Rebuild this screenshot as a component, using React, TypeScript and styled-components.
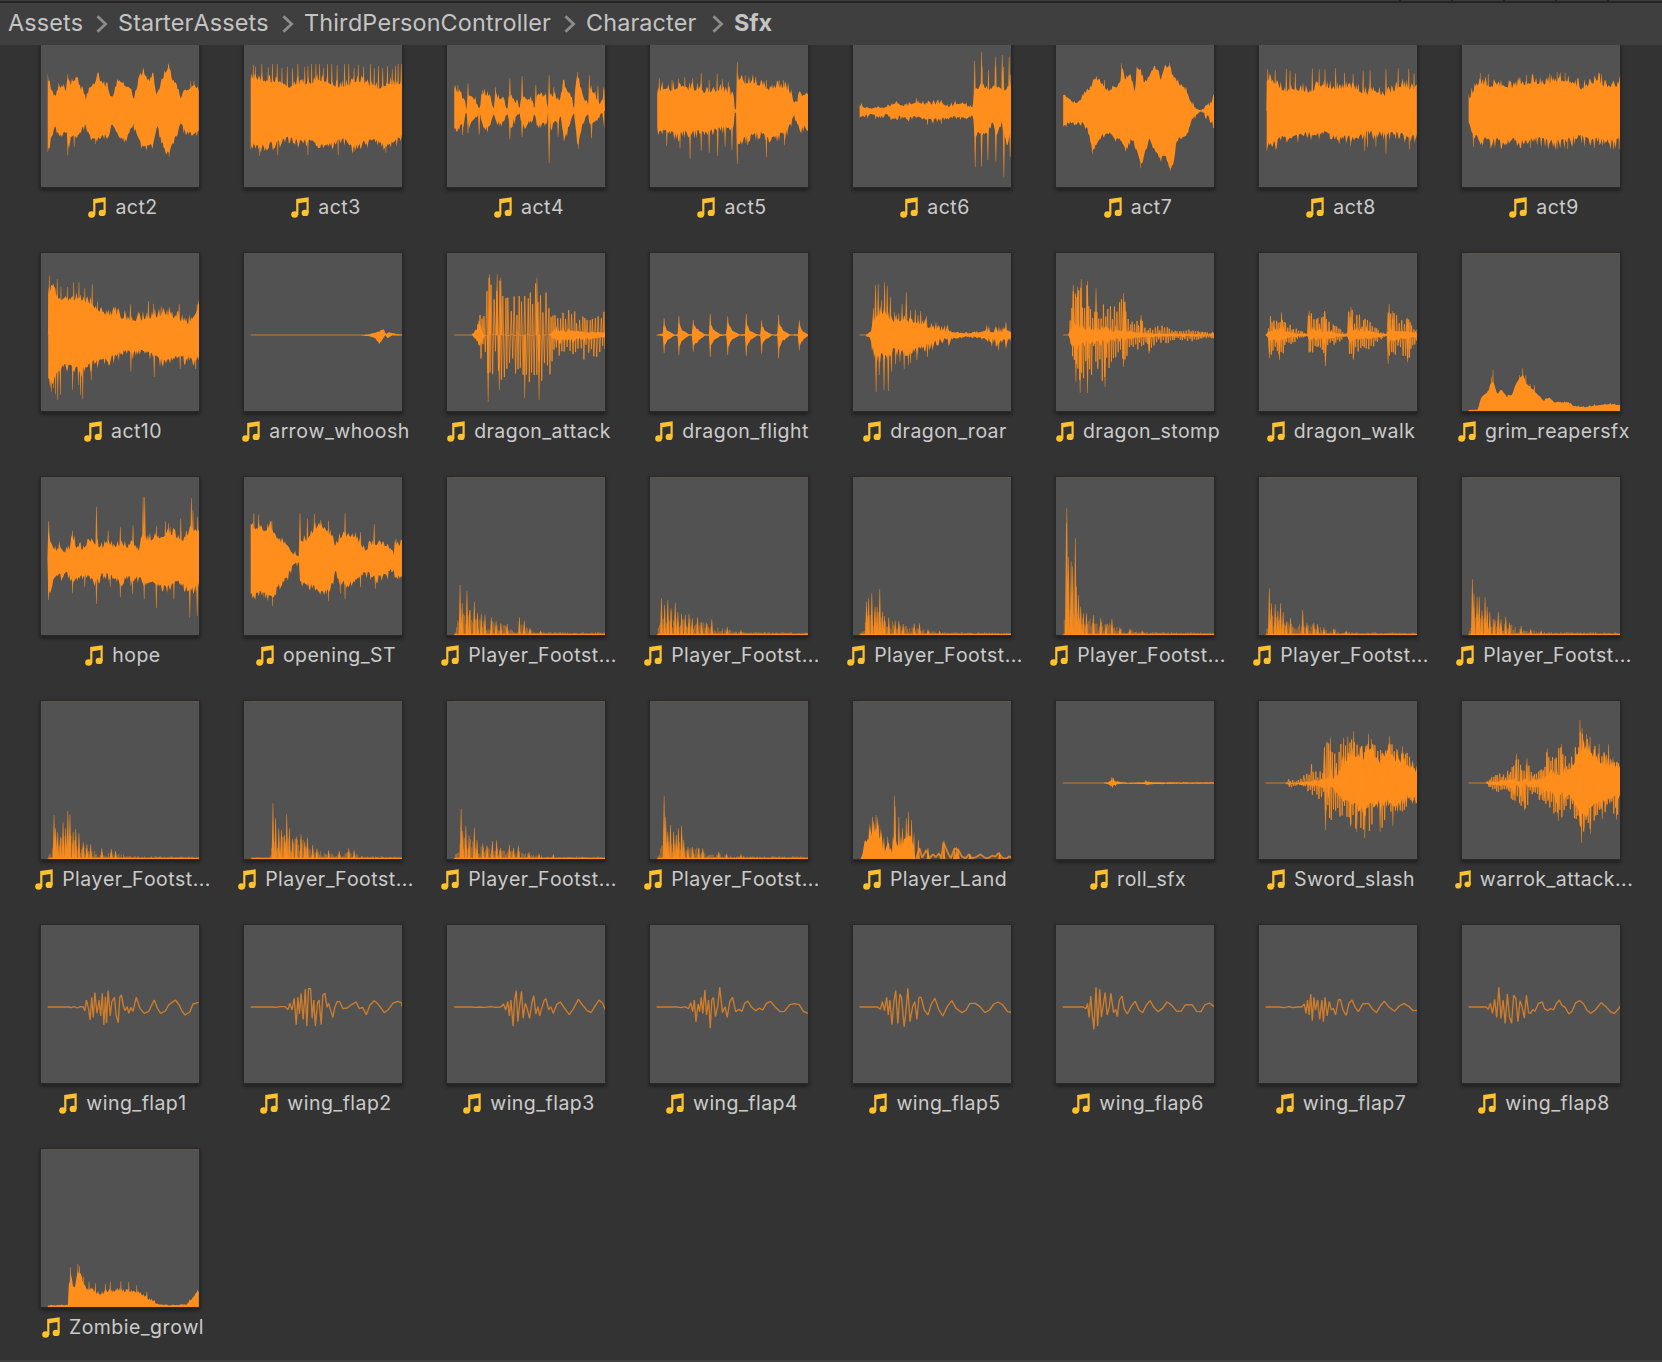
import React from "react";
import styled, { createGlobalStyle } from "styled-components";

const GlobalStyle = createGlobalStyle`
  html, body { margin: 0; padding: 0; background: #333333; overflow: hidden; }
  body { font-family: Inter, "Noto Sans", sans-serif; font-kerning: none; color: #c8c8c8; }
`;

const Panel = styled.div`
  width: 1662px;
  height: 1362px;
  display: flex;
  flex-direction: column;
  background: #333333;
  overflow: hidden;
`;

const TabEdge = styled.div`
  flex: none;
  box-sizing: border-box;
  height: 3px;
  display: flex;
  justify-content: flex-end;
  gap: 50px;
  padding-right: 53px;
  background: #3c3c3c;
  border-bottom: 2px solid #242424;
`;

const TabDivider = styled.i`
  width: 2px;
  height: 1px;
  background: #242424;
`;

const Breadcrumbs = styled.nav`
  flex: none;
  height: 42px;
  display: flex;
  align-items: center;
  gap: 10px;
  padding: 0 0 3px 8px;
  box-sizing: border-box;
  background: #3f3f3f;
`;

const Crumb = styled.span<{ $w: number; $current?: boolean }>`
  width: ${(p) => p.$w}px;
  font-size: 23.4px;
  line-height: 28px;
  font-weight: ${(p) => (p.$current ? 700 : 400)};
  letter-spacing: ${(p) => (p.$current ? 0 : 0.12)}px;
  white-space: nowrap;
  color: #c4c4c4;
`;

const Chevron = styled.svg`
  flex: none;
  width: 12px;
  height: 18px;
  margin-top: 3px;
  fill: none;
  stroke: #8c8c8c;
  stroke-width: 2.8;
`;

const Viewport = styled.main`
  flex: 1;
  overflow: hidden;
  border-bottom: 2px solid #414041;
`;

const Grid = styled.div`
  display: grid;
  grid-template-columns: repeat(8, 158px);
  grid-auto-rows: 224px;
  column-gap: 45px;
  margin-top: -16px;
  padding-left: 41px;
`;

const Asset = styled.div`
  display: flex;
  flex-direction: column;
  align-items: center;
`;

const Preview = styled.div`
  flex: none;
  width: 158px;
  height: 158px;
  background: #525252;
  box-shadow: 0 0 0 1px #2a2a2a, 0 1px 2px 2px rgba(34, 34, 34, 0.55), 0 4px 3px rgba(34, 34, 34, 0.8);
`;

const Wave = styled.svg`
  display: block;
  width: 158px;
  height: 158px;
  overflow: hidden;
`;

const Label = styled.div`
  width: 200px;
  margin-top: 7px;
  padding-left: 6px;
  box-sizing: border-box;
  display: flex;
  justify-content: center;
  align-items: center;
  gap: 9px;
`;

const Name = styled.span`
  font-size: 19.5px;
  line-height: 26px;
  letter-spacing: 0.45px;
  white-space: nowrap;
  color: #cbcbcb;
`;

const Note = styled.svg<{ $small?: boolean }>`
  flex: none;
  width: ${(p) => (p.$small ? 16 : 18)}px;
  height: ${(p) => (p.$small ? 19 : 21)}px;
  margin-top: 0;
  fill: #ffc22d;
`;

const ORANGE = "#ff8e1c";

type Pt = [number, number];
const parse = (s: string): Pt[] =>
  s.trim().split(/\s+/).map((p) => p.split(",").map(Number) as Pt);

const at = (pts: Pt[], x: number): number => {
  if (x <= pts[0][0]) return pts[0][1];
  for (let i = 1; i < pts.length; i++) {
    if (x <= pts[i][0]) {
      const [x0, y0] = pts[i - 1];
      const [x1, y1] = pts[i];
      return x1 === x0 ? y1 : y0 + ((y1 - y0) * (x - x0)) / (x1 - x0);
    }
  }
  return pts[pts.length - 1][1];
};

const random = (seed: number) => () => {
  seed = (seed * 1664525 + 1013904223) % 4294967296;
  return seed / 4294967296;
};

interface Clip {
  name: string;
  small?: boolean;
  /** x position of the tile in the sample sheet */
  ox: number;
  /** solid body: upper outline, lower outline, roughness */
  body?: [string, string, number];
  /** thin peaks: x,y pairs measured from the axis */
  peaks?: string;
  /** fast oscillation between two outlines, with its step */
  dense?: [string, string, number];
  /** single traced line */
  line?: string;
  /** one-sided decay sitting on the bottom edge */
  hits?: string;
}

const rowTop = [87, 54, 51, 48, 45, 57];
const C = [77.4, 460.4, 843.4, 1226.4, 41.5, 424.5, 807.5, 1190.5];

const rows: Clip[][] = [
  [
    {
      name: "act2", ox: C[0],
      body: [
        "90,228 95,262 104,294 110,262 118,256 124,272 128,228 132,258 136,245 145,232 152,268 158,276 162,296 170,258 178,250 185,222 192,255 204,260 210,298 218,262 225,237 236,254 246,262 252,298 260,250 270,212 280,245 290,220 294,295 304,248 312,216 318,198 325,238 333,254 341,292 350,270 360,262 366,250 375,272",
        "90,462 96,415 104,380 112,412 120,400 127,400 130,450 134,410 145,412 160,375 170,410 180,420 195,408 204,402 210,372 225,412 238,418 251,372 262,420 270,444 290,432 296,375 305,425 318,460 330,415 341,372 350,395 365,402 375,396", 8],
      peaks: "128,222 128,466 186,218 318,194 319,470 270,210 360,244 140,440 180,432 366,242",
    },
    {
      name: "act3", ox: C[1],
      body: [
        "473,240 490,235 505,242 525,240 545,258 560,248 580,250 600,236 615,240 635,258 655,255 680,240 695,250 715,262 735,246 750,256 759,245",
        "473,432 490,442 505,435 525,428 545,415 565,425 585,422 600,440 620,436 635,424 650,420 665,445 690,425 710,422 728,440 745,425 759,410", 11],
      peaks: "478,194 482,200 494,192 506,202 514,192 523,192 532,204 542,200 552,205 562,192 575,200 581,198 588,192 596,192 603,192 610,204 618,192 626,192 636,196 650,192 658,192 668,204 676,194 686,200 699,192 706,204 714,198 722,204 731,198 740,208 746,198 751,192 757,192 490,468 524,466 581,465 638,465 668,455 728,458",
    },
    {
      name: "act4", ox: C[2],
      body: [
        "857,262 863,272 874,295 880,330 884,280 893,290 905,325 909,280 925,285 931,325 936,290 950,300 957,325 962,282 970,300 981,320 986,290 1005,300 1008,325 1014,278 1030,292 1034,322 1040,285 1058,300 1062,245 1072,275 1083,322 1088,220 1098,275 1109,320 1114,262 1128,300 1136,322 1140,262",
        "857,388 865,385 874,370 880,335 884,375 893,365 905,340 912,388 925,382 931,340 936,370 950,368 957,338 962,380 970,360 981,340 986,378 1005,360 1008,338 1014,380 1030,370 1034,338 1040,380 1058,350 1064,424 1072,385 1083,340 1090,445 1098,380 1109,342 1114,380 1128,360 1136,335 1140,390", 9],
      peaks: "864,255 883,250 873,405 883,400 962,235 962,418 985,228 985,412 1011,254 1036,226 1036,490 1045,260 1053,410 1064,240 1090,216 1091,446 1112,226 1116,415 1128,258 1139,262 910,270 935,262 904,404",
    },
    {
      name: "act5", ox: C[3],
      body: [
        "1240,274 1250,262 1262,268 1275,262 1290,255 1300,268 1315,264 1330,274 1345,270 1360,266 1375,274 1384,288 1386,330 1390,330 1392,236 1405,246 1420,242 1435,254 1450,266 1465,258 1480,256 1490,274 1500,312 1510,284 1525,276",
        "1240,388 1250,396 1262,396 1275,406 1290,396 1300,402 1315,396 1330,396 1345,392 1360,386 1375,381 1384,372 1386,335 1390,335 1392,436 1405,416 1420,408 1435,396 1450,420 1465,408 1480,400 1490,380 1500,345 1510,390 1525,375", 12],
      peaks: "1244,235 1268,240 1280,236 1292,232 1307,235 1323,218 1338,240 1353,222 1363,238 1374,246 1391,186 1391,492 1406,226 1426,230 1446,240 1470,240 1478,240 1258,438 1283,445 1302,476 1323,452 1338,458 1354,468 1368,440 1381,450 1410,435 1446,472 1480,436",
    },
    {
      name: "act6", ox: C[4],
      body: [
        "54,320 60,318 75,326 88,320 100,325 115,312 125,308 140,320 158,305 175,310 190,312 208,308 222,318 235,312 248,306 258,318 268,318 271,262 278,270 284,250 290,262 300,268 310,255 322,272 332,265 340,250",
        "54,350 62,350 75,342 88,350 105,345 118,360 130,350 145,356 158,350 175,358 190,360 208,356 222,356 235,350 250,356 262,352 268,345 271,420 278,395 284,400 294,402 305,365 312,410 322,365 332,440 340,390", 6],
      peaks: "271,182 284,155 297,210 310,170 323,165 336,170 339,225 272,502 284,500 296,480 311,486 326,532 338,470 161,294 182,374 208,372 285,200 311,200 325,200",
    },
    {
      name: "act7", ox: C[5],
      body: [
        "438,284 448,292 460,310 472,295 482,270 490,265 496,235 505,240 512,252 522,272 535,262 545,258 549,200 555,238 562,225 570,245 573,285 577,200 584,212 590,245 597,240 605,208 614,205 622,240 628,205 638,196 644,225 652,240 660,262 670,268 678,305 688,325 697,331 704,326 706,318 712,318 720,300 723,284",
        "438,382 448,365 460,372 475,365 485,390 493,450 502,430 512,405 525,395 535,420 545,412 556,450 565,420 572,425 580,470 585,495 592,460 600,415 610,450 622,478 630,462 640,510 648,480 652,415 660,410 670,410 678,365 688,345 697,335 704,339 706,348 712,350 720,368 723,382", 6],
      peaks: "548,190 639,188 584,505 640,514 516,240 493,462",
    },
    {
      name: "act8", ox: C[6],
      body: [
        "822,238 832,238 845,258 860,270 875,264 890,268 905,272 920,254 940,258 958,264 975,258 990,264 1010,280 1025,270 1045,282 1060,268 1080,254 1095,266 1106,260",
        "822,434 838,430 850,412 865,420 880,410 900,402 915,408 930,400 945,408 960,416 975,412 990,420 1010,398 1030,400 1050,402 1070,400 1090,416 1106,405", 12],
      peaks: "824,208 838,210 859,206 866,212 876,220 908,206 921,208 932,208 952,204 969,218 985,222 1004,212 1017,210 1047,208 1070,204 1090,206 1100,220 1012,442 1028,440 1047,462 1091,448 1007,454 980,438",
    },
    {
      name: "act9", ox: C[7],
      body: [
        "1203,300 1208,278 1215,260 1225,244 1240,252 1255,256 1270,252 1290,260 1305,250 1320,242 1335,250 1350,244 1365,238 1385,236 1400,246 1415,262 1430,252 1445,238 1460,254 1475,256 1489,250",
        "1203,365 1208,400 1215,412 1225,414 1240,424 1255,420 1270,432 1285,420 1300,426 1320,422 1335,414 1350,424 1365,428 1385,424 1400,414 1415,410 1430,424 1445,416 1460,422 1475,426 1489,420", 14],
      peaks: "1225,220 1240,222 1312,224 1356,220 1370,216 1385,218 1448,218 1454,222 1265,446 1320,444 1370,448 1390,448 1440,444 1487,448 1212,440",
    },
  ],
  [
    {
      name: "act10", ox: C[0],
      body: [
        "91,172 100,168 110,184 122,194 135,188 148,194 160,194 172,202 180,218 190,230 205,238 218,236 235,248 250,252 270,250 285,244 300,238 315,236 330,244 345,254 355,260 365,240 375,212",
        "91,436 100,440 110,412 120,390 132,396 145,402 160,404 175,382 190,380 205,374 220,362 235,350 250,356 270,350 285,360 300,374 315,378 335,368 352,368 365,380 375,368", 13],
      peaks: "93,122 98,150 108,132 115,155 127,156 139,142 149,142 160,160 174,148 184,200 215,216 246,208 280,198 290,206 304,214 338,206 372,208 97,470 105,478 109,496 114,480 137,464 152,480 156,492 172,436 247,410 291,426 340,402 369,402 101,460 148,450",
    },
    {
      name: "arrow_whoosh", ox: C[1],
      line: "473,300 685,300",
      body: ["683,300 698,297 710,292 718,288 723,282 728,298 733,292 745,296 759,299", "683,301 698,304 708,310 716,326 722,312 727,300 731,310 740,301 759,302", 2],
    },
    {
      name: "dragon_attack", ox: C[2],
      line: "857,300 891,300",
      body: ["890,300 898,285 905,262 910,292 916,300 1036,300 1046,285 1080,288 1110,292 1142,292", "890,300 898,312 905,335 910,312 916,300 1036,300 1050,318 1080,314 1110,312 1142,306", 8],
      dense: [
        "898,286 905,240 912,235 916,150 924,118 931,165 938,118 945,125 952,190 962,185 972,170 980,160 986,140 994,130 1002,180 1008,130 1014,128 1020,180 1027,158 1036,185 1042,240 1056,235 1068,220 1082,230 1094,216 1106,240 1120,252 1132,225 1142,230",
        "898,312 905,390 914,350 920,500 930,410 940,465 949,450 960,380 968,440 976,400 984,440 990,490 1000,430 1010,440 1018,496 1026,400 1034,430 1042,380 1056,355 1068,370 1082,358 1098,388 1110,345 1120,375 1132,350 1142,380", 4.9],
      peaks: "924,118 938,118 945,128 1013,128 921,500 990,490 942,465 1017,496",
    },
    {
      name: "dragon_flight", ox: C[3],
      body: [
        "1239,299 1251,296 1253,262 1258,285 1272,298 1279,298 1281,260 1287,285 1300,298 1306,298 1308,268 1316,284 1330,298 1338,298 1340,262 1346,284 1360,298 1371,298 1373,258 1380,286 1395,298 1406,298 1408,262 1414,286 1428,298 1435,298 1437,272 1444,288 1456,298 1467,298 1470,262 1476,286 1490,298 1505,298 1508,268 1515,290 1525,298",
        "1239,301 1251,303 1253,335 1258,318 1272,302 1279,302 1281,340 1287,316 1300,302 1306,302 1308,332 1316,318 1330,302 1338,302 1340,336 1346,318 1360,302 1371,302 1373,340 1380,315 1395,302 1406,302 1408,338 1414,318 1428,302 1435,302 1437,330 1444,315 1456,302 1467,302 1470,340 1476,318 1490,302 1505,302 1508,335 1515,312 1525,302", 3],
      peaks: "1253,250 1253,354 1281,242 1281,360 1308,254 1308,350 1340,236 1340,366 1373,244 1373,360 1408,236 1408,364 1437,256 1437,356 1469,240 1469,370 1508,256 1508,346",
    },
    {
      name: "dragon_roar", ox: C[4],
      line: "54,300 70,300",
      body: [
        "66,300 74,290 80,262 84,240 95,232 105,232 112,250 125,258 135,248 145,256 160,260 175,268 190,276 210,284 230,291 255,295 280,291 295,287 310,284 325,287 340,284",
        "66,301 74,310 80,345 86,370 95,360 105,368 115,345 130,350 145,352 160,346 175,338 190,326 210,317 230,310 255,305 280,308 300,315 320,320 340,315", 12],
      peaks: "80,220 84,150 89,148 95,196 101,142 106,152 112,185 120,232 134,206 142,172 150,225 159,224 169,228 180,244 198,262 85,470 91,420 100,465 108,468 114,410 122,388 138,402 150,384 162,376 182,366 316,346 330,340 330,262 128,235 164,240 130,380 146,390",
    },
    {
      name: "dragon_stomp", ox: C[5],
      line: "438,300 450,300",
      body: ["448,300 454,275 465,270 480,280 495,282 520,285 550,284 575,292 600,295 640,297 723,298", "448,300 454,330 465,335 480,325 495,325 520,315 550,315 575,308 600,305 640,304 723,302", 10],
      dense: [
        "448,298 453,220 457,150 464,160 472,132 479,170 484,140 492,215 500,162 508,210 520,190 530,220 540,205 552,175 560,245 572,265 584,240 596,280 612,266 630,270 645,288 672,280 700,290 723,292",
        "448,302 453,360 458,420 465,445 470,472 478,420 484,472 494,380 504,435 516,455 524,390 536,370 552,395 562,330 578,350 590,325 600,356 615,322 632,328 650,312 672,322 700,310 723,310", 3.9],
      peaks: "457,150 465,155 472,132 484,138 500,160 552,174 555,200 470,474 484,474 517,456 552,396 462,440 585,240 600,356",
    },
    {
      name: "dragon_walk", ox: C[6],
      body: ["820,300 827,285 845,282 860,290 880,296 899,299 902,285 915,286 935,287 955,295 974,299 977,280 990,284 1010,287 1030,294 1048,299 1051,280 1065,288 1085,290 1106,294", "820,300 827,315 845,318 860,310 880,304 899,302 902,315 915,312 935,313 955,305 974,302 977,316 990,316 1010,312 1030,307 1048,302 1051,318 1065,314 1085,310 1106,305", 8],
      dense: [
        "822,298 827,240 838,245 850,232 858,262 872,275 885,285 898,298 901,228 912,232 920,245 932,228 940,262 955,275 972,298 975,225 981,216 990,235 1005,242 1015,252 1030,280 1048,298 1051,208 1060,228 1072,245 1088,248 1100,280 1106,278",
        "822,302 827,370 838,345 848,375 858,340 872,322 885,312 898,302 901,365 912,350 920,342 932,392 940,335 955,325 972,302 975,360 986,375 998,345 1015,345 1030,320 1048,302 1051,386 1060,360 1072,365 1088,382 1100,330 1106,320", 3.8],
      peaks: "850,232 902,226 932,228 981,215 1053,207 1088,248 827,370 846,375 933,393 986,376 1051,387 1088,382 977,230 1060,228",
    },
    {
      name: "grim_reapersfx", ox: C[7],
      body: [
        "1203,525 1220,524 1226,490 1232,478 1240,470 1246,438 1252,450 1257,478 1265,462 1275,486 1285,478 1292,450 1300,428 1306,418 1312,448 1325,465 1335,480 1345,498 1355,486 1365,502 1380,503 1390,502 1400,512 1420,516 1440,512 1460,507 1475,509 1489,511",
        "1203,529 1489,529", 2.5],
      peaks: "1249,405 1246,425 1305,400 1299,420 1311,420 1319,446 1327,450",
    },
  ],
  [
    {
      name: "hope", ox: C[0],
      body: [
        "91,228 98,248 106,278 112,252 120,270 130,276 137,230 145,262 155,265 165,248 175,240 185,255 195,260 205,245 215,258 228,250 240,258 250,245 262,268 270,225 280,240 290,232 305,228 318,216 330,226 345,238 358,210 375,205",
        "91,395 98,365 108,348 118,342 128,340 137,370 150,352 165,350 180,370 195,340 205,345 215,342 228,376 240,345 250,368 262,350 275,376 290,370 305,382 320,380 335,366 345,376 358,390 375,376", 11],
      peaks: "92,184 92,420 137,212 137,400 182,140 182,432 204,212 227,202 227,412 251,196 250,402 270,112 273,112 272,418 295,198 295,444 312,184 318,190 341,176 361,115 364,150 358,472 372,468 373,170 328,418 208,380 160,382",
    },
    {
      name: "opening_ST", ox: C[1],
      body: [
        "473,195 480,204 490,204 500,208 512,198 520,228 530,242 542,250 550,272 558,285 564,292 566,235 575,245 585,225 592,208 603,192 615,212 625,226 632,254 642,232 655,224 668,228 680,250 690,270 700,250 712,250 725,252 735,264 743,280 745,240 752,256 759,245",
        "473,402 480,405 490,398 500,402 515,416 522,382 532,370 542,350 550,325 558,312 564,305 566,368 578,375 590,372 602,402 615,390 628,370 633,335 640,362 655,370 668,366 680,350 690,335 705,353 718,350 730,345 743,320 747,358 759,342", 10],
      peaks: "479,160 488,164 513,182 514,438 482,418 498,412 566,160 580,176 593,162 605,180 620,182 620,424 642,400 651,160 651,418 680,216 680,382 706,192 708,386 747,236",
    },
    { name: "Player_Footst...", ox: C[2], hits: "857,520 863,488 870,470 880,465 890,455 900,470 912,480 925,485 940,492 955,500 965,512 978,518 985,490 995,505 1010,516 1142,518", peaks: "868,375 872,430 881,392 886,450 895,425 901,458 908,462 915,465 927,472 936,484 945,490 957,492 980,472 989,482 1000,505 1020,512" },
    { name: "Player_Footst...", ox: C[3], hits: "1240,520 1245,480 1255,465 1270,460 1285,475 1300,480 1320,490 1340,492 1352,505 1375,510 1390,516 1525,518", peaks: "1248,415 1254,435 1260,420 1266,445 1274,428 1279,455 1286,462 1293,465 1300,462 1306,475 1316,472 1324,485 1333,488 1343,478 1372,502 1398,510" },
    { name: "Player_Footst...", ox: C[4], hits: "54,521 62,500 67,465 80,460 95,465 105,482 125,485 140,500 165,502 180,513 210,517 340,518", peaks: "67,425 71,415 77,400 83,440 87,440 92,388 97,455 101,468 109,472 121,482 128,482 136,492 157,490 167,490 183,508 205,513" },
    { name: "Player_Footst...", ox: C[5], hits: "438,521 443,440 455,460 468,460 480,470 495,485 515,490 530,495 545,508 555,515 565,508 575,516 723,518", peaks: "445,145 444,190 448,290 453,305 456,318 461,235 463,380 467,405 471,440 476,460 482,460 495,465 509,474 519,492 530,476 545,502 564,506 587,512" },
    { name: "Player_Footst...", ox: C[6], hits: "820,521 826,470 835,465 848,465 855,480 868,485 885,495 900,492 915,498 930,508 940,518 948,506 958,517 1106,518", peaks: "827,385 831,430 838,432 843,452 848,430 853,455 859,485 867,474 890,450 898,488 911,488 918,492 930,502 949,506 972,512" },
    { name: "Player_Footst...", ox: C[7], hits: "1203,521 1208,470 1220,465 1235,462 1250,485 1265,485 1280,495 1300,508 1320,512 1345,516 1489,518", peaks: "1210,358 1213,400 1219,410 1223,410 1228,450 1234,412 1238,440 1243,455 1251,478 1259,455 1264,478 1273,470 1280,488 1302,498 1320,508 1340,512" },
  ],
  [
    { name: "Player_Footst...", ox: C[0], hits: "90,518 98,490 104,460 115,460 130,455 145,468 158,482 175,498 190,505 205,502 220,505 240,511 265,515 375,515", peaks: "102,390 105,430 109,442 114,455 119,412 124,430 128,378 132,388 138,440 143,432 149,445 157,472 164,478 171,478 192,490 210,492 218,498" },
    { name: "Player_Footst...", ox: C[1], hits: "473,518 510,517 514,460 525,465 540,460 555,465 570,468 585,485 600,500 615,506 630,510 645,506 658,500 675,508 690,514 759,515", peaks: "515,355 520,400 526,430 531,435 537,450 541,388 546,430 552,462 559,455 568,448 575,470 580,458 590,480 598,490 620,496 640,498 658,490 668,496" },
    { name: "Player_Footst...", ox: C[2], hits: "857,519 866,480 875,465 890,470 905,485 925,485 940,495 960,498 980,500 1000,509 1020,510 1040,515 1142,515", peaks: "870,372 873,438 879,424 885,452 895,428 900,465 911,475 919,482 929,468 937,466 944,488 961,480 969,488 978,482 998,502 1017,506 1044,508" },
    { name: "Player_Footst...", ox: C[3], hits: "1240,519 1250,480 1260,460 1275,455 1290,465 1300,490 1325,492 1332,512 1355,507 1375,512 1395,514 1525,515", peaks: "1253,332 1256,395 1260,440 1265,420 1271,440 1276,450 1280,430 1286,422 1290,465 1298,485 1307,486 1318,490 1326,490 1356,500 1371,506 1398,508" },
    {
      name: "Player_Land", ox: C[4],
      body: ["56,510 64,475 72,450 78,440 84,425 90,440 95,465 101,490 105,470 110,478 115,498 119,460 124,475 130,480 138,460 146,440 152,455 157,480 158,522", "56,523 158,523", 24],
      line: "160,522 167,490 172,518 180,495 186,520 192,508 198,516 204,505 208,522 212,472 220,502 226,520 233,490 240,495 247,515 254,520 260,508 266,520 274,516 282,508 290,518 296,520 304,512 310,515 316,504 324,520 332,520 336,514 340,518",
      peaks: "72,430 85,390 78,395 90,420 107,455 120,332 121,365 128,395 135,430 142,400 146,380 152,405 165,464 183,488 213,466 237,486 240,490 233,490 262,506 318,502",
    },
    {
      name: "roll_sfx", ox: C[5],
      line: "437,294 520,294",
      body: ["515,294 524,291 530,284 536,289 545,291 560,293 590,292 597,290 610,292 723,292", "515,295 524,298 530,303 536,299 545,297 560,296 590,297 597,299 610,297 723,296", 2],
      peaks: "530,276 533,280 531,308 537,303 527,304 541,288 594,286 596,300",
    },
    {
      name: "Sword_slash", ox: C[6],
      line: "820,294 860,294",
      body: [
        "858,294 900,290 915,288 930,284 945,278 958,258 968,228 978,215 990,205 1005,215 1012,195 1025,205 1036,230 1045,215 1055,200 1065,222 1080,225 1090,237 1100,248 1106,260",
        "858,295 900,300 915,302 930,306 945,315 958,338 970,352 985,362 1000,370 1015,362 1028,358 1040,345 1050,350 1062,372 1075,358 1085,335 1098,342 1106,345", 18],
      dense: [
        "858,290 868,276 876,292 885,280 898,262 908,234 918,258 928,250 931,185 940,160 952,200 960,175 972,155 986,140 998,185 1014,148 1028,180 1042,180 1053,155 1065,200 1080,185 1092,215 1106,250",
        "858,298 868,312 878,298 890,308 905,330 918,350 928,330 933,435 944,400 955,395 968,405 980,425 992,440 1007,460 1020,420 1036,440 1048,390 1060,425 1075,395 1090,355 1106,350", 4.2],
      peaks: "931,185 942,158 967,158 975,155 986,138 1014,146 1054,154 1078,184 933,435 980,425 992,440 1007,460 1036,442 1060,422 1020,162 998,185",
    },
    {
      name: "warrok_attack...", small: true, ox: C[7],
      line: "1203,294 1236,294",
      body: [
        "1234,294 1245,290 1260,288 1280,284 1300,280 1315,285 1330,287 1350,272 1370,262 1385,258 1400,235 1412,195 1422,185 1435,205 1450,225 1465,235 1480,240 1489,242",
        "1234,295 1245,300 1260,300 1280,304 1300,310 1315,305 1330,304 1350,322 1370,335 1385,330 1400,342 1414,400 1425,385 1440,365 1455,350 1470,345 1489,335", 16],
      dense: [
        "1236,290 1246,276 1256,262 1270,268 1282,245 1293,205 1302,240 1312,222 1325,270 1340,240 1350,198 1362,200 1376,180 1388,215 1400,195 1409,170 1414,105 1422,148 1432,160 1442,170 1454,200 1467,178 1478,220 1489,210",
        "1236,298 1246,320 1256,322 1270,320 1282,342 1295,355 1308,375 1320,330 1334,345 1350,360 1362,395 1375,408 1386,370 1398,400 1410,420 1416,472 1424,440 1434,430 1444,400 1456,400 1470,375 1482,400 1489,380", 3.6],
      peaks: "1293,206 1313,220 1351,190 1378,178 1413,105 1417,130 1425,148 1432,155 1449,178 1467,178 1308,376 1372,408 1416,474 1433,446 1421,430 1482,404 1455,402",
    },
  ],
  [
    { name: "wing_flap1", ox: C[0], line: "90,291 130,291 134,293 140,290 146,294 152,290 157,291 160,302 163,270 167,296 170,330 173,262 176,322 179,248 183,310 187,270 190,318 193,250 196,345 199,260 201,340 204,242 208,318 211,275 216,262 219,315 223,338 226,262 229,255 233,288 236,302 240,290 243,310 247,292 251,304 257,262 264,295 272,310 281,304 286,286 291,270 297,295 303,310 312,303 318,285 324,278 331,270 338,285 343,302 349,315 358,306 364,282 375,277" },
    { name: "wing_flap2", ox: C[1], line: "473,291 515,291 520,292 530,290 538,290 543,299 547,280 551,300 555,265 559,344 562,262 565,312 568,250 572,328 576,238 579,348 582,236 586,236 589,325 592,270 595,348 599,280 602,270 606,344 609,255 613,250 617,292 620,280 624,302 628,322 632,290 636,275 641,275 647,296 655,294 664,283 672,276 678,296 684,292 691,314 698,285 706,272 712,280 718,292 725,308 733,298 741,280 750,274 757,278 759,290" },
    { name: "wing_flap3", ox: C[2], line: "857,291 890,291 895,292 905,291 915,292 925,290 935,292 945,291 950,282 954,300 958,275 961,318 964,270 968,348 971,270 974,242 977,335 980,290 984,244 987,325 991,280 994,292 999,325 1004,275 1007,257 1011,312 1015,290 1018,318 1022,295 1027,270 1030,266 1035,300 1039,290 1044,310 1050,284 1057,276 1064,292 1074,314 1082,296 1091,268 1099,285 1108,302 1115,308 1122,290 1130,270 1137,280 1142,300" },
    { name: "wing_flap4", ox: C[3], line: "1239,291 1277,291 1285,293 1292,290 1299,296 1303,278 1307,305 1310,270 1313,335 1317,282 1320,305 1323,262 1326,310 1330,240 1333,315 1337,270 1340,355 1343,270 1346,262 1350,320 1354,290 1358,232 1363,308 1368,290 1372,322 1377,275 1382,262 1388,305 1394,298 1400,304 1405,280 1411,273 1418,292 1426,302 1433,294 1439,300 1446,280 1454,274 1462,290 1472,305 1480,304 1490,284 1499,281 1508,284 1516,305 1525,310" },
    { name: "wing_flap5", ox: C[4], line: "54,291 88,291 93,298 97,275 101,302 105,262 108,315 111,270 115,344 119,270 122,242 126,340 130,252 133,262 138,350 141,310 145,235 149,335 154,290 158,275 162,328 166,262 170,262 176,300 183,315 189,282 196,265 203,298 211,318 219,290 228,272 236,295 247,308 255,300 262,280 272,280 281,290 290,308 299,300 307,282 315,276 324,285 333,305 340,307" },
    { name: "wing_flap6", ox: C[5], line: "437,291 476,291 481,296 484,280 487,322 490,258 493,315 496,358 500,232 503,348 507,238 510,322 514,282 517,248 521,315 525,290 528,250 533,308 537,298 540,320 544,270 549,258 553,295 559,312 566,290 574,274 581,300 588,308 595,285 602,272 609,292 617,305 625,296 634,276 643,286 652,304 661,303 668,285 681,284 690,304 698,305 705,285 714,279 723,290" },
    { name: "wing_flap7", ox: C[6], line: "820,291 845,291 855,293 865,290 871,293 880,291 888,291 893,282 896,310 899,270 902,315 905,252 908,332 911,262 914,300 918,270 922,328 926,270 929,335 932,262 936,318 940,275 944,300 948,295 952,315 957,270 961,268 966,300 972,316 977,280 983,270 989,292 995,305 1003,282 1014,280 1021,296 1029,308 1037,286 1044,274 1052,290 1063,304 1072,288 1081,281 1090,289 1098,302 1106,301" },
    { name: "wing_flap8", ox: C[7], line: "1203,291 1236,291 1240,298 1244,280 1248,310 1252,268 1256,322 1260,232 1264,325 1268,270 1272,340 1276,252 1280,320 1284,340 1288,255 1292,265 1296,335 1300,272 1304,292 1308,324 1312,256 1316,308 1320,310 1324,298 1328,304 1335,280 1342,276 1346,296 1352,302 1358,296 1363,300 1368,282 1374,270 1379,286 1385,292 1392,312 1398,304 1405,278 1413,272 1420,282 1426,300 1433,310 1442,300 1453,278 1462,290 1471,306 1478,310 1485,298 1489,288" },
  ],
  [
    {
      name: "Zombie_growl", ox: 77.4,
      body: [
        "90,526 128,525 130,465 134,440 138,468 142,470 146,425 153,430 158,470 165,478 175,480 185,490 195,492 203,482 213,484 225,480 237,484 250,482 262,487 275,500 285,514 297,522 320,526 352,524 358,510 365,500 370,484 375,485",
        "90,532 375,532", 6],
      peaks: "133,412 147,402 150,408 158,440 168,455 180,460 199,462 208,455 228,454 243,456 258,466 277,485",
    },
  ],
];

const Waveform = ({ clip, row, index }: { clip: Clip; row: number; index: number }) => {
  const top = rowTop[row];
  const grounded = !!clip.hits || /grim|Zombie|Land/.test(clip.name);
  const floor = top + 474;
  const axis = grounded ? floor : top + 246;
  const rnd = random(row * 97 + index * 13 + 7);
  for (let i = 0; i < 5; i++) rnd();

  let body = "";
  if (clip.body) {
    const up = parse(clip.body[0]);
    const down = parse(clip.body[1]);
    const rough = clip.body[2];
    // mostly small wobble, with an occasional longer burr pointing outwards
    const burr = () => (Math.pow(rnd(), 2.5) * 2.4 - 0.55) * rough;
    const upper: string[] = [];
    const lower: string[] = [];
    for (let x = up[0][0]; x <= up[up.length - 1][0] + 1; x += 1.9) {
      const u = at(up, x) - burr() * (at(up, x) > axis - 12 ? 0.2 : 1);
      const d = at(down, x) + (grounded ? 0 : burr() * (at(down, x) < axis + 12 ? 0.2 : 1));
      upper.push(`${x.toFixed(1)},${Math.min(u, axis).toFixed(1)}`);
      lower.unshift(`${x.toFixed(1)},${Math.max(d, axis).toFixed(1)}`);
    }
    body = `M${upper.join("L")}L${lower.join("L")}Z`;
  }

  let dense = "";
  if (clip.dense) {
    const up = parse(clip.dense[0]);
    const down = parse(clip.dense[1]);
    const pts: string[] = [];
    let x = up[0][0];
    while (x <= up[up.length - 1][0]) {
      const step = clip.dense[2] * (0.65 + rnd() * 0.7);
      const u = axis - (axis - at(up, x)) * (0.35 + Math.sqrt(rnd()) * 0.65);
      const d = axis + (at(down, x) - axis) * (0.35 + Math.sqrt(rnd()) * 0.65);
      pts.push(`${x.toFixed(1)},${u.toFixed(1)}`);
      pts.push(`${(x + step / 2).toFixed(1)},${d.toFixed(1)}`);
      x += step;
    }
    dense = `M${pts.join("L")}`;
  }

  let hits = "";
  if (clip.hits) {
    const env = parse(clip.hits);
    for (let x = env[0][0]; x < clip.ox + 298; x += 2.2) {
      const h = (floor - at(env, x)) * (0.3 + rnd() * 0.85);
      hits += `M${x.toFixed(1)},${floor}V${(floor - h).toFixed(1)}`;
    }
  }

  const peaks = clip.peaks
    ? parse(clip.peaks).map(([x, y]) => `M${x - 2.6},${axis}L${x - 0.5},${y}h1L${x + 2.6},${axis}Z`).join("")
    : "";

  return (
    <Wave viewBox={`${clip.ox} ${top} 298 474`} preserveAspectRatio="none">
      {grounded && <path d={`M${clip.ox + 13},${top + 1.5}h286`} stroke="#665647" strokeWidth={3} />}
      {body && <path d={body} fill={ORANGE} />}
      {peaks && <path d={peaks} fill={ORANGE} fillOpacity={0.9} />}
      {dense && (
        <path d={dense} fill="none" stroke={ORANGE} strokeOpacity={0.82} strokeWidth={1} strokeLinejoin="bevel" vectorEffect="non-scaling-stroke" />
      )}
      {hits && (
        <>
          <path d={hits} stroke={ORANGE} strokeOpacity={0.75} strokeWidth={1.6} />
          <path d={`M${clip.ox + 14},${floor - 2}H${clip.ox + 298}`} stroke={ORANGE} strokeWidth={4} />
        </>
      )}
      {clip.line && (
        <polyline
          points={clip.line}
          fill="none"
          stroke={ORANGE}
          strokeOpacity={row === 4 ? 0.72 : 0.8}
          strokeWidth={row === 4 ? 1.35 : grounded ? 1.8 : 0.9}
          strokeLinejoin="bevel"
          vectorEffect="non-scaling-stroke"
        />
      )}
    </Wave>
  );
};

const MusicNote = ({ small }: { small?: boolean }) => (
  <Note viewBox="0 0 18 21" $small={small}>
    <path d="M5.2 2 17.7.2V16h-2.2V5L7.4 6.2V18H5.2Z" />
    <ellipse cx="3.6" cy="17.5" rx="3.4" ry="3.2" />
    <ellipse cx="14.1" cy="15.9" rx="3.5" ry="3.2" />
  </Note>
);

const Separator = () => (
  <Chevron viewBox="0 0 12 18">
    <path d="M1.4 1.2 9.6 9 1.4 16.8" />
  </Chevron>
);

const path: [string, number][] = [
  ["Assets", 78],
  ["StarterAssets", 154],
  ["ThirdPersonController", 250],
  ["Character", 116],
  ["Sfx", 40],
];

export default function App() {
  return (
    <Panel>
      <GlobalStyle />
      <TabEdge>
        {[0, 1, 2, 3, 4].map((i) => (
          <TabDivider key={i} />
        ))}
      </TabEdge>
      <Breadcrumbs>
        {path.map(([text, w], i) => (
          <React.Fragment key={text}>
            {i > 0 && <Separator />}
            <Crumb $w={w} $current={i === path.length - 1}>
              {text}
            </Crumb>
          </React.Fragment>
        ))}
      </Breadcrumbs>
      <Viewport>
        <Grid>
          {rows.map((row, r) =>
            row.map((clip, i) => (
              <Asset key={`${r}-${i}`}>
                <Preview>
                  <Waveform clip={clip} row={r} index={i} />
                </Preview>
                <Label>
                  <MusicNote small={clip.small} />
                  <Name>{clip.name}</Name>
                </Label>
              </Asset>
            )),
          )}
        </Grid>
      </Viewport>
    </Panel>
  );
}
